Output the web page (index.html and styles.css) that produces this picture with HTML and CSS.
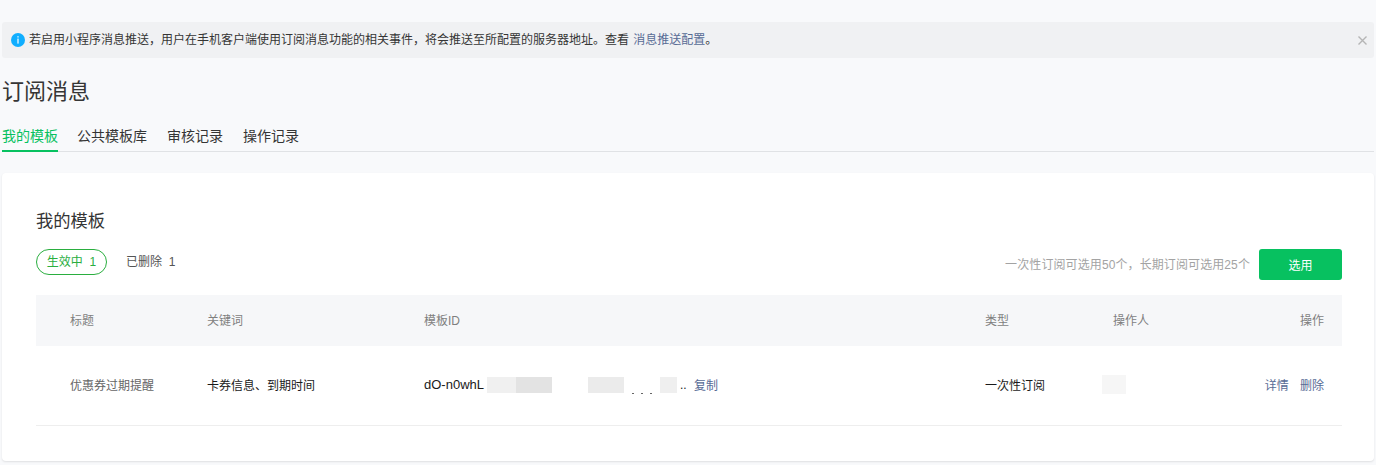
FILE: index.html
```html
<!DOCTYPE html>
<html lang="zh-CN">

<head>
    <meta charset="UTF-8">
    <meta name="viewport" content="width=device-width, initial-scale=1.0">
    <title>订阅消息</title>
    <link rel="stylesheet" href="styles.css">
</head>

<body>
    <div class="notice">
        <svg class="notice-icon" width="14" height="14" viewBox="0 0 14 14">
            <circle cx="7" cy="7" r="7" fill="#10aeff"></circle>
            <rect x="6.4" y="3.2" width="1.2" height="1.3" fill="#fff"></rect>
            <rect x="6.4" y="5.6" width="1.2" height="5" fill="#fff"></rect>
        </svg>
        <p class="notice-text">若启用小程序消息推送，用户在手机客户端使用订阅消息功能的相关事件，将会推送至所配置的服务器地址。查看 <a class="link" href="#">消息推送配置</a>。</p>
        <svg class="notice-close" width="9" height="9" viewBox="0 0 9 9">
            <path d="M0.5 0.5L8.5 8.5M8.5 0.5L0.5 8.5" stroke="#b5b5b5" stroke-width="1.4" fill="none"></path>
        </svg>
    </div>

    <h1 class="page-title">订阅消息</h1>

    <nav class="tabs">
        <a class="tab active" href="#">我的模板</a>
        <a class="tab" href="#">公共模板库</a>
        <a class="tab" href="#">审核记录</a>
        <a class="tab" href="#">操作记录</a>
    </nav>

    <section class="card">
        <h2 class="card-title">我的模板</h2>

        <div class="toolbar">
            <span class="pill">生效中&nbsp; 1</span>
            <span class="deleted">已删除&nbsp; 1</span>
            <span class="quota">一次性订阅可选用50个，长期订阅可选用25个</span>
            <button class="btn-primary" type="button">选用</button>
        </div>

        <div class="table-head grid-row">
            <span>标题</span>
            <span>关键词</span>
            <span>模板ID</span>
            <span>类型</span>
            <span>操作人</span>
            <span class="cell-right">操作</span>
        </div>

        <div class="table-row grid-row">
            <span class="cell-muted">优惠券过期提醒</span>
            <span>卡券信息、到期时间</span>
            <span class="id-cell">
                <span class="id-text">dO-n0whL</span>
                <i class="mask mask-a"></i>
                <i class="mask mask-b"></i>
                <i class="mask mask-c"></i>
                <i class="id-dots"></i>
                <i class="mask mask-d"></i>
                <span class="id-end">..</span>
                <a class="link copy" href="#">复制</a>
            </span>
            <span>一次性订阅</span>
            <span><i class="mask mask-user"></i></span>
            <span class="cell-right actions">
                <a class="link" href="#">详情</a>
                <a class="link" href="#">删除</a>
            </span>
        </div>
    </section>
</body>

</html>
```

FILE: styles.css
```css
body {
    margin: 0;
    padding: 22px 2px 0;
    height: 465px;
    box-sizing: border-box;
    overflow: hidden;
    background-color: #f8f9fb;
    color: #353535;
    font-family: "Liberation Sans", "Noto Sans CJK SC", sans-serif;
    font-size: 12px;
}

.link {
    color: #576b95;
    text-decoration: none;
}

.notice {
    display: flex;
    align-items: center;
    height: 36px;
    padding: 0 7px 0 9px;
    background-color: #f0f1f3;
    border-radius: 3px;
}

.notice-icon {
    flex: none;
    margin-right: 4px;
}

.notice-text {
    flex: 1;
    margin: 0;
    line-height: 18px;
}

.notice-text .link {
    margin-left: 1px;
}

.notice-close {
    flex: none;
    margin-left: 10px;
}

.page-title {
    margin: 19px 0 0;
    font-size: 22px;
    font-weight: 400;
    line-height: 30px;
    color: #353535;
}

.tabs {
    display: flex;
    gap: 20px;
    margin-top: 15px;
    border-bottom: 1px solid #e0e2e5;
}

.tab {
    height: 29px;
    line-height: 28px;
    box-sizing: border-box;
    font-size: 14px;
    color: #353535;
    text-decoration: none;
}

.tab.active {
    color: #07c160;
    border-bottom: 2px solid #07c160;
    margin-bottom: -1px;
    margin-right: -1px;
    height: 30px;
}

.card {
    height: 288px;
    margin-top: 21px;
    padding: 36px 32px 0 34px;
    box-sizing: border-box;
    background-color: #fff;
    border-radius: 4px;
    box-shadow: 0 1px 2px rgba(0, 0, 0, 0.1);
}

.card-title {
    margin: 0;
    font-size: 17.3px;
    font-weight: 400;
    line-height: 24px;
}

.toolbar {
    display: flex;
    align-items: center;
    margin-top: 16px;
    height: 31px;
}

.pill {
    align-self: flex-start;
    width: 71px;
    height: 26px;
    box-sizing: border-box;
    border: 1px solid #2aae3f;
    border-radius: 13px;
    color: #2aae3f;
    line-height: 24px;
    text-align: center;
}

.deleted {
    align-self: flex-start;
    margin-left: 19px;
    line-height: 27px;
    color: #555;
}

.quota {
    margin-left: auto;
    margin-right: 9px;
    margin-bottom: 2px;
    color: #a3a3a3;
    letter-spacing: 0.1px;
}

.btn-primary {
    width: 83px;
    height: 31px;
    padding: 0;
    border: 0;
    border-radius: 3px;
    background-color: #07c160;
    color: #fff;
    font: inherit;
}

.grid-row {
    display: grid;
    grid-template-columns: 137px 217px 561px 128px 1fr 60px;
    align-items: center;
    padding: 0 18px 0 34px;
}

.table-head {
    height: 51px;
    box-sizing: border-box;
    margin-top: 15px;
    padding-bottom: 3px;
    background-color: #f6f7f9;
    color: #7f7f7f;
}

.table-row {
    height: 80px;
    box-sizing: border-box;
    padding-bottom: 2px;
    border-bottom: 1px solid #eeeeee;
    color: #1a1a1a;
}

.cell-muted {
    color: #666;
}

.cell-right {
    text-align: right;
}

.actions .link + .link {
    margin-left: 8px;
}

.id-cell {
    display: flex;
    align-items: center;
}

.id-text {
    font-size: 13px;
    width: 63px;
}

.mask {
    display: block;
    height: 16px;
}

.mask-a {
    width: 29px;
    background-color: #f0f0f0;
}

.mask-b {
    width: 36px;
    background-color: #e3e3e3;
}

.mask-c {
    width: 36px;
    margin-left: 36px;
    background-color: #ebebeb;
}

.id-dots {
    align-self: flex-end;
    width: 20px;
    height: 1px;
    margin: 0 8px -1px;
    background-image: linear-gradient(90deg, #666 2px, transparent 2px);
    background-size: 9px 1px;
}

.mask-d {
    width: 17px;
    background-color: #efefef;
}

.mask-user {
    width: 24px;
    height: 19px;
    margin-left: -11px;
    background-color: #f6f6f6;
}

.id-end {
    width: 17px;
    padding-left: 3px;
    box-sizing: border-box;
}
```
